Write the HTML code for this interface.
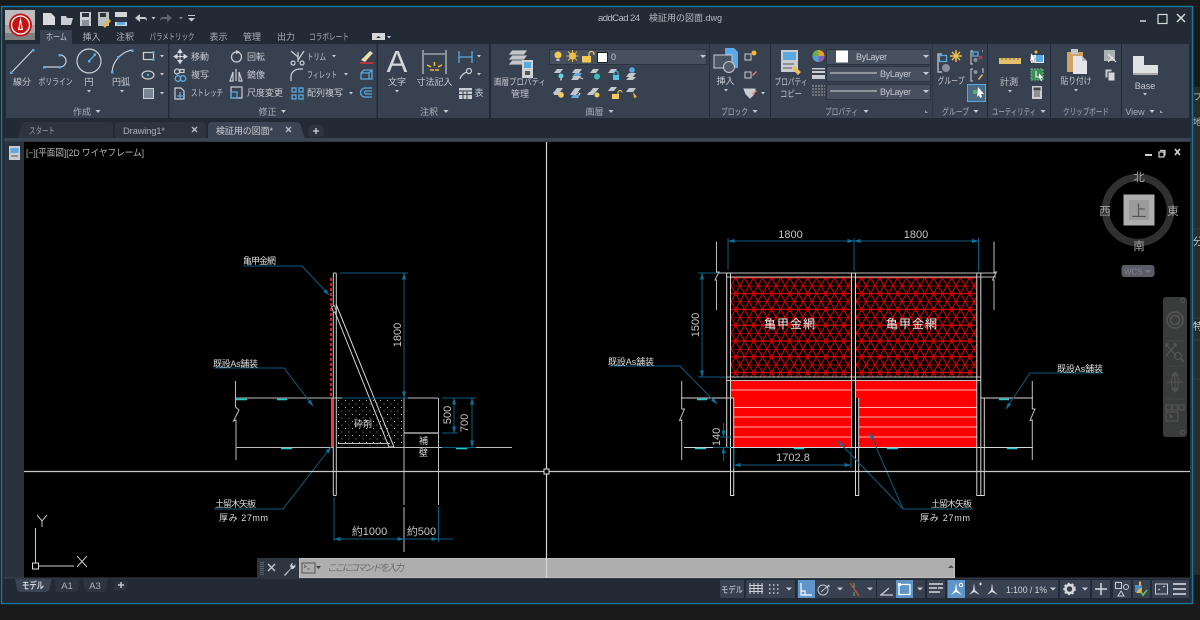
<!DOCTYPE html>
<html><head><meta charset="utf-8"><style>
html,body{margin:0;padding:0;background:#1a1a1a;width:1200px;height:620px;overflow:hidden}
svg{display:block;font-family:"Liberation Sans","Noto Sans CJK JP",sans-serif}
.t{fill:#c6cad0;font-size:9px;text-anchor:middle}
.s{fill:#c6cad0;font-size:9px}
.l{fill:#aab0b8;font-size:9px;text-anchor:middle}
.d{fill:#dcdcdc;font-size:9px}
.n{fill:#c4c4c4;font-size:11px;text-anchor:middle;font-family:"Liberation Sans",sans-serif}
.ic{fill:none;stroke:#ccd0d5;stroke-width:1.2}
.bl{fill:none;stroke:#5ba8e0;stroke-width:1.3}
.dim{stroke:#0b5d80;stroke-width:1;fill:none}
.g{stroke:#bdbdbd;stroke-width:1;fill:none}
.w{stroke:#d6d6d6;stroke-width:1;fill:none}
.c{stroke:#19cfd6;stroke-width:1.600;fill:none}
.ar{fill:#c6cad0}
</style></head><body>
<svg width="1200" height="620" viewBox="0 0 1200 620" xmlns="http://www.w3.org/2000/svg">
<defs>
<marker id="a" markerWidth="7" markerHeight="5" refX="6.5" refY="2.5" orient="auto-start-reverse" markerUnits="userSpaceOnUse"><path d="M0 .5L7 2.5L0 4.5z" fill="#0c6f98"/></marker>
<pattern id="mesh" patternUnits="userSpaceOnUse" x="731" y="285.7" width="9" height="15.8"><path d="M0 0H9M0 7.9H9" stroke="#f00000" stroke-width="1.200"/><path d="M0 0L4.5 7.9L9 0M0 15.8L4.5 7.9L9 15.8" stroke="#e00000" stroke-width="1" fill="none"/></pattern>
<pattern id="dots" patternUnits="userSpaceOnUse" x="337" y="399" width="7" height="7"><rect x="1" y="1" width="1" height="1" fill="#bbb"/><rect x="4.5" y="4.5" width="1" height="1" fill="#999"/></pattern>
</defs>

<rect width="1200" height="620" fill="#1a1a1a"/>
<!-- background right window pieces -->
<rect x="1193" y="87" width="7" height="533" fill="#2b2b2b"/>
<rect x="1193" y="575" width="7" height="45" fill="#1a1a1a"/>
<path d="M1193 229H1200M1193 318H1200M1193 340H1200M1193 379H1200" stroke="#3c3c3c"/>
<text x="1193" y="100" fill="#bbb" font-size="9">プロ</text><text x="1193" y="125" fill="#bbb" font-size="9">地</text>
<text x="1193" y="245" fill="#ccc" font-size="10">分</text><text x="1193" y="330" fill="#ccc" font-size="10">特</text>

<!-- window -->
<rect x="1.5" y="6.5" width="1191" height="597" fill="#222a35" stroke="#14789f" stroke-width="1.4"/>
<rect x="4" y="141" width="1187" height="437" fill="#2a323e"/>
<!-- logo -->
<rect x="5" y="10" width="30" height="30" fill="#a5a5a5"/>
<rect x="5" y="10" width="30" height="15" fill="#bdbdbd"/>
<rect x="5" y="33" width="30" height="7" fill="#7f7f7f"/>
<circle cx="20.5" cy="25" r="11.5" fill="#c01515"/><circle cx="20.5" cy="25" r="9" fill="none" stroke="#fff" stroke-width="1.3"/><path d="M20.5 17L18 30H23z" fill="#fff"/><path d="M20.5 22L19.500 29H21.500z" fill="#c01515"/>
<!-- QAT -->
<path d="M43 13h8l4 4v8H43z" fill="#d7d9dc"/>
<path d="M61 16h5l1 2h6l-2 7H61z" fill="#c9ccd0"/>
<path d="M80 12h11v14H80z" fill="#c9ccd0"/><rect x="82" y="13" width="7" height="4" fill="#2a323e"/><rect x="82" y="20" width="7" height="6" fill="#8a9099"/>
<path d="M98 12h11v14H98z" fill="#b9bcc0"/><rect x="100" y="13" width="6" height="4" fill="#2a323e"/><path d="M103 26l6-7 2 2-6 7z" fill="#e3b646"/>
<rect x="115" y="12" width="12" height="14" fill="#d4d6da"/><rect x="115" y="17" width="12" height="5" fill="#2d3540"/><rect x="117" y="22" width="8" height="3" fill="#55aee8"/>
<path d="M135 18l5-4v3h4c2 0 3 1 3 4-1-2-2-2-3-2h-4v3z" fill="#c9ccd0"/><path d="M151.500 17h4l-2 2.500z" class="ar"/>
<path d="M172 18l-5-4v3h-4c-2 0-3 1-3 4 1-2 2-2 3-2h4v3z" fill="#5d6570"/><path d="M179 17h4l-2 2.500z" fill="#7b828c"/>
<path d="M188 15h7v1h-7zM188 18h7l-3.500 3.500z" class="ar"/>
<text x="598" y="21" fill="#b8bcc2" font-size="9.500" textLength="42">addCad 24</text>
<text x="649" y="21" fill="#b8bcc2" font-size="9" textLength="73">検証用の図面.dwg</text>
<path d="M1140 21h6" stroke="#d8d8d8" stroke-width="1.500"/><rect x="1158" y="14.500" width="9" height="9" fill="none" stroke="#d8d8d8" stroke-width="1.200"/><path d="M1177 14l8 8M1185 14l-8 8" stroke="#e2e2e2" stroke-width="1.400"/>

<!-- ribbon tabs -->
<rect x="40" y="30" width="32" height="14" fill="#38414f"/>
<text class="t" x="56.500" y="40" textLength="21" lengthAdjust="spacingAndGlyphs">ホーム</text>
<text class="l" x="91.500" y="40">挿入</text><text class="l" x="125" y="40">注釈</text><text class="l" x="172" y="40" textLength="45" lengthAdjust="spacingAndGlyphs">パラメトリック</text><text class="l" x="218.500" y="40">表示</text><text class="l" x="252" y="40">管理</text><text class="l" x="286" y="40">出力</text><text class="l" x="329" y="40" textLength="40" lengthAdjust="spacingAndGlyphs">コラボレート</text>
<rect x="372" y="33" width="13" height="7" fill="#d5d7da"/><path d="M376 38h5l-2.500-2z" fill="#333"/><path d="M387 36h4l-2 2.500z" class="ar"/>

<!-- ribbon panels -->
<g fill="#38414f">
<rect x="6" y="44" width="162" height="74"/><rect x="169.500" y="44" width="207" height="74"/><rect x="378" y="44" width="111" height="74"/><rect x="491" y="44" width="218" height="74"/><rect x="710" y="44" width="60" height="74"/><rect x="771" y="44" width="161.500" height="74"/><rect x="933" y="44" width="54" height="74"/><rect x="988" y="44" width="62" height="74"/><rect x="1051" y="44" width="70" height="74"/><rect x="1122" y="44" width="67" height="74"/>
</g>
<g id="ribbon-labels">
<text class="l" x="82" y="115">作成</text><text class="l" x="267.500" y="115">修正</text><text class="l" x="429" y="115">注釈</text><text class="l" x="594.500" y="115">画層</text><text class="l" x="734.500" y="115" textLength="27" lengthAdjust="spacingAndGlyphs">ブロック</text><text class="l" x="841.500" y="115" textLength="33" lengthAdjust="spacingAndGlyphs">プロパティ</text><text class="l" x="955.500" y="115" textLength="27" lengthAdjust="spacingAndGlyphs">グループ</text><text class="l" x="1014" y="115" textLength="44" lengthAdjust="spacingAndGlyphs">ユーティリティ</text><text class="l" x="1086" y="115" textLength="46" lengthAdjust="spacingAndGlyphs">クリップボード</text>
<text class="l" x="1135" y="115" font-size="9.500">View</text>
<path d="M95.500 110h5l-2.500 3zM281 110h5l-2.500 3zM443.500 110h5l-2.500 3zM608.500 110h5l-2.500 3zM752.500 110h5l-2.500 3zM863.500 110h5l-2.500 3zM973.500 110h5l-2.500 3zM1040.500 110h5l-2.500 3zM1149.500 110h5l-2.500 3z" class="ar"/>
<path d="M925 110l3 3h-3zM1160 110l3 3h-3z" fill="#9aa0a8"/>
</g>

<!-- 作成 -->
<path class="ic" d="M11 73L33 50"/><g fill="#5ba8e0"><rect x="10" y="71.500" width="2.500" height="2.500"/><rect x="32" y="49" width="2.500" height="2.500"/></g>
<path class="ic" d="M44 67H60A6 6 0 0 0 60 55H59"/><g fill="#5ba8e0"><rect x="43" y="66" width="2.500" height="2.500"/><rect x="58.500" y="66" width="2.500" height="2.500"/><rect x="58.500" y="54" width="2.500" height="2.500"/></g>
<circle class="ic" cx="89" cy="61" r="12"/><path class="bl" d="M89 61L95 55"/><g fill="#5ba8e0"><rect x="88" y="60" width="2.500" height="2.500"/><rect x="93.500" y="53.500" width="2.500" height="2.500"/></g>
<path class="ic" d="M112 72C113 60 122 52 132 50"/><g fill="#5ba8e0"><rect x="111" y="71" width="2.500" height="2.500"/><rect x="131" y="49.500" width="2.500" height="2.500"/><rect x="117" y="56" width="2.500" height="2.500"/></g>
<text class="t" x="22" y="85">線分</text><text class="t" x="55.500" y="85" textLength="34" lengthAdjust="spacingAndGlyphs">ポリライン</text><text class="t" x="89" y="85">円</text><text class="t" x="121" y="85">円弧</text>
<path class="ar" d="M87 90h4l-2 2.500zM120 90h4l-2 2.500zM160 55h4l-2 2.500zM160 73h4l-2 2.500zM160 92h4l-2 2.500z"/>
<rect class="ic" x="143.500" y="52.500" width="10" height="7"/><g fill="#5ba8e0"><rect x="152.500" y="59" width="2" height="2"/><rect x="152.500" y="51" width="2" height="2"/></g>
<ellipse class="ic" cx="148" cy="75" rx="6" ry="4"/><circle cx="148" cy="75" r="1.200" fill="#5ba8e0"/>
<rect x="143.500" y="88.500" width="10" height="10" fill="#7a8593" stroke="#ccd0d5"/>

<!-- 修正 -->
<path d="M180 51v11M175 56.500h11M180 49.500l-2 3h4zM180 63.500l-2-3h4zM174 56.500l3-2v4zM187 56.500l-3-2v4z" fill="#d6d9dd" stroke="#d6d9dd"/>
<circle class="ic" cx="177" cy="71.500" r="2.500"/><rect class="ic" x="180" y="69.500" width="4" height="3"/><circle class="bl" cx="178" cy="78.500" r="2.800"/><circle class="bl" cx="183" cy="78.500" r="2.800"/>
<path class="ic" d="M175 88h6l3 3v8h-9z"/><path class="bl" d="M180 92v7M177 96h6"/>
<circle class="ic" cx="236.500" cy="57" r="5"/><path d="M236 50l4 2-4 2z" fill="#ccd0d5"/>
<path class="ic" d="M236 69v12M233 72l-3 9h3zM239 72l3 9h-3z"/>
<rect class="ic" x="231" y="87" width="11" height="11"/><rect class="bl" x="231" y="92" width="6" height="6"/>
<path class="ic" d="M291 51l7 6M304 51l-6 9M293 61a2 2 0 1 0 .1 0M302 61a2 2 0 1 0 .1 0M298 52v10"/>
<path class="ic" d="M291 81v-4c0-5 4-8 9-8h3"/>
<g fill="none" stroke="#5ba8e0" stroke-width="1.300"><rect x="292" y="88" width="4" height="4"/><rect x="299" y="88" width="4" height="4"/><rect x="292" y="95" width="4" height="4"/><rect x="299" y="95" width="4" height="4"/></g>
<path class="ar" d="M332 55h4l-2 2.500zM344 73h4l-2 2.500zM349 92h4l-2 2.500z"/>
<text class="s" x="191" y="60">移動</text><text class="s" x="191" y="78">複写</text><text class="s" x="191" y="96" textLength="32" lengthAdjust="spacingAndGlyphs">ストレッチ</text>
<text class="s" x="247" y="60">回転</text><text class="s" x="247" y="78">鏡像</text><text class="s" x="247" y="96">尺度変更</text>
<text class="s" x="307" y="60" textLength="19" lengthAdjust="spacingAndGlyphs">トリム</text><text class="s" x="307" y="78" textLength="30" lengthAdjust="spacingAndGlyphs">フィレット</text><text class="s" x="307" y="96">配列複写</text>
<path d="M361 60l9-9 3 2-8 9z" fill="#e8dcb0"/><path d="M360 63h13" stroke="#d33" stroke-width="1.500"/>
<path class="bl" d="M361 73l3-3h8v9h-11zM361 73h8v6M369 73l3-3"/>
<path class="bl" d="M372 88h-7a4 4 0 0 0 0 9h7M372 91h-6a1.500 1.500 0 0 0 0 3h6"/>

<!-- 注釈 -->
<text x="397" y="72" font-size="31" fill="#d4d7db" text-anchor="middle" font-family="Liberation Sans,sans-serif">A</text>
<text class="t" x="397" y="85">文字</text><path class="ar" d="M395 90h4l-2 2.500z"/>
<path d="M423 50v24M446 50v24" stroke="#b9bdc3" stroke-width="1.300"/><path d="M424 54h21" stroke="#ccd0d5"/><path d="M427 65l4 2M442 65l-4 2M434.500 62v4M430 70h4M435 70h4" stroke="#eebb33" stroke-width="1.500"/>
<text class="t" x="434.500" y="85">寸法記入</text>
<path class="bl" d="M459 51v12M472 51v12M459 57h13"/><path class="ar" d="M477 55h4l-2 2.500zM477 73h4l-2 2.500z"/>
<circle class="ic" cx="469" cy="71" r="2.500"/><path class="ic" d="M460 79c1-4 4-6 7-7"/>
<rect x="459" y="88" width="13" height="11" fill="#c9ccd0"/><path d="M459 91h13M459 94.500h13M463 91v8M467 91v8" stroke="#38414f"/>
<text class="t" x="479" y="96">表</text>

<!-- 画層 -->
<path d="M512 50h16l-4 5h-16zM512 55h16l-4 5h-16zM512 60h16l-4 5h-16z" fill="#c3c6ca" stroke="#38414f" stroke-width=".8"/>
<rect x="522" y="60" width="11" height="18" fill="#d0d2d5"/><rect x="524" y="62" width="7" height="6" fill="#5aa9e0"/><rect x="525" y="71" width="5" height="4" fill="#555"/>
<text class="t" x="520" y="85" textLength="52" lengthAdjust="spacingAndGlyphs">画層プロパティ</text><text class="t" x="520" y="97">管理</text>
<rect x="549.500" y="49.500" width="157" height="15" fill="#47505f" stroke="#2c3440"/>
<circle cx="558" cy="55" r="3.500" fill="#f1cb56"/><rect x="556.500" y="59" width="3" height="2" fill="#ccc"/>
<circle cx="572.500" cy="56" r="3.500" fill="#f1cb56"/><path d="M572.500 50v12M566.500 56h12M568 51.500l9 9M577 51.500l-9 9" stroke="#e9b94a"/>
<rect x="582" y="56" width="9" height="6.500" fill="#f1cb56"/><path d="M589 56v-2a2.500 2.500 0 0 1 5 0v1" fill="none" stroke="#f1cb56" stroke-width="1.300"/>
<rect x="597.500" y="52.500" width="10" height="10" fill="#fff" stroke="#222"/>
<text class="s" x="611" y="60">0</text><path class="ar" d="M700 55h6l-3 3z"/>
<g id="layers">
<path d="M557 69h6l-3 4h-6zM575 69h7l-3 4h-7zM593 69h6l-3 4h-6zM611 69h6l-3 4h-6zM629 73h7l-3 4h-7z" fill="#c3c6ca"/>
<circle cx="561" cy="76" r="2.500" fill="#65d2df"/><rect x="560" y="78.500" width="2" height="2" fill="#aaa"/>
<path d="M575 73h7l-3 4h-7z" fill="#63a8d8"/><path d="M574 76h7l-3 4h-7z" fill="#c3c6ca"/><path d="M579 77l4 2" stroke="#ccc"/>
<circle cx="597" cy="76.500" r="3" fill="#39c0b8"/>
<rect x="613" y="75" width="6" height="5" fill="#5ac0e0"/><path d="M614 75v-2a2 2 0 0 1 4 0v2" fill="none" stroke="#5ac0e0"/>
<circle cx="632" cy="70" r="2.800" fill="#5aa9e0"/><path d="M629 77h7l-3 3h-7z" fill="#c3c6ca"/>
<path d="M557 88h6l-3 4h-6zM553 92h10l-3 3h-6zM575 88h6l-3 4h-6zM593 88h6l-3 4h-6zM611 87h6l-3 4h-6zM629 88h7l-3 4h-7zM589 92h7l-3 3h-6zM572 92h7l-3 3h-6z" fill="#c3c6ca"/>
<circle cx="561" cy="95" r="2.800" fill="#f1cb56"/><path d="M580 93l-3 5" stroke="#d8d8d8" stroke-width="1.300"/><path d="M573 95h7l-3 3h-6z" fill="#5aa9e0"/>
<circle cx="597" cy="95" r="2.500" fill="#f1cb56"/><rect x="612" y="94" width="7" height="5" fill="#f1cb56"/><path d="M618 94v-1.500a2 2 0 0 1 4 0" fill="none" stroke="#f1cb56"/>
<path d="M633 92l4 5-3 1z" fill="#e3b646"/>
</g>
<!-- ブロック -->
<path d="M725 48h9l4 4v16h-13z" fill="#5aa9e8"/><rect x="714" y="55" width="18" height="13" fill="#4b5563" stroke="#c9ccd0"/><circle cx="729" cy="67" r="5.500" fill="#555d69" stroke="#c9ccd0"/>
<text class="t" x="725.500" y="84">挿入</text><path class="ar" d="M724 89h4l-2 2.500z"/>
<g fill="none" stroke="#ccd0d5"><rect x="745" y="54" width="6" height="6"/><rect x="745" y="72" width="6" height="6"/><path d="M744 89h11l-1 5-4 4-4-4z" fill="#c9ccd0"/></g>
<circle cx="754" cy="53" r="2.500" fill="#eebb33"/><path d="M752 75l4-4 1 1-4 4z" fill="#e77"/><path d="M752 94l4-4 1 1-4 4z" fill="#e77"/><path class="ar" d="M761 92h4l-2 2.500z"/>
<!-- プロパティ -->
<rect x="781" y="50" width="17" height="22" fill="#c9ccd0"/><rect x="783" y="52" width="13" height="8" fill="#5aa9e0"/><path d="M783 64h11M783 68h9" stroke="#555"/><path d="M794 66l7 6-3 3-6-6z" fill="#e8c060"/>
<text class="t" x="791" y="85" textLength="33" lengthAdjust="spacingAndGlyphs">プロパティ</text><text class="t" x="791" y="97" textLength="22" lengthAdjust="spacingAndGlyphs">コピー</text>
<circle cx="818.500" cy="56" r="6" fill="#d9584a"/><path d="M818.500 56V50a6 6 0 0 1 6 6z" fill="#ea9b33"/><path d="M818.500 56l6 0a6 6 0 0 1-6 6z" fill="#8a5fb5"/><path d="M818.500 56v6a6 6 0 0 1-6-6z" fill="#4da4cf"/><path d="M818.500 56h-6a6 6 0 0 1 6-6z" fill="#60b34e"/>
<path d="M812 68h13v1.500H812zM812 71h13v2H812zM812 75h13v4H812z" fill="#c9ccd0"/>
<path d="M812 86h13M812 89h13M812 92h13M812 95h13" stroke="#aaa" stroke-dasharray="2 1"/>
<g fill="#47505f" stroke="#2c3440"><rect x="826.500" y="49.500" width="104" height="15"/><rect x="826.500" y="66.500" width="104" height="15"/><rect x="826.500" y="84.500" width="104" height="15"/></g>
<rect x="836" y="50.500" width="12" height="12" fill="#fff"/>
<text class="s" x="856" y="60" textLength="31">ByLayer</text><text class="s" x="880" y="77" textLength="31">ByLayer</text><text class="s" x="880" y="95" textLength="31">ByLayer</text>
<path d="M830 73h47M830 91h47" stroke="#d8d8d8"/><path class="ar" d="M923 55h6l-3 3zM923 72h6l-3 3zM923 90h6l-3 3z"/>
<!-- グループ -->
<path class="ic" d="M942 54h-4v18h4M950 54h0"/><rect class="bl" x="939.500" y="55.500" width="7" height="6"/><circle cx="946" cy="68" r="4" fill="#8a9099"/><path d="M956 50v12M950 56h12M952 52l8 8M960 52l-8 8" stroke="#e9c050" stroke-width="1.500"/>
<text class="t" x="951" y="84" textLength="27" lengthAdjust="spacingAndGlyphs">グループ</text>
<g fill="none" stroke="#ccd0d5"><path d="M973 51h-2v13h2M983 51h-1M973 69h-2v12h2M982 69h1v4M973 86h-2v11h2"/></g>
<rect class="bl" x="973" y="52" width="5" height="4"/><circle cx="975.500" cy="60" r="2" fill="#8a9099"/><path d="M979 56l3 3M982 56l-3 3" stroke="#d33" stroke-width="1.300"/>
<circle cx="975.500" cy="72" r="2" fill="#8a9099"/><path d="M978 79l4-5 1 1-4 5z" fill="#e8c060"/>
<rect x="967.500" y="84.500" width="18" height="17" fill="#4a6a84" stroke="#5ba8e0"/><circle cx="975" cy="92" r="2.200" fill="#59b36b"/><path d="M978 87l6 7-3 0 1 3-2 1-1-3-2 2z" fill="#fff"/>
<!-- ユーティリティ -->
<rect x="999" y="58" width="22" height="6" fill="#e4c16a"/><path d="M1002 58v2M1006 58v2M1010 58v2M1014 58v2M1018 58v2" stroke="#7a6230"/>
<text class="t" x="1009" y="85">計測</text><path class="ar" d="M1008 90h4l-2 2.500z"/>
<rect x="1031" y="55" width="13" height="8" fill="#e8eaec"/><rect x="1036" y="55" width="7" height="7" fill="#5aa9e0"/><path d="M1031 53l5 6-2 0 1 3-2 1-1-3-2 2z" fill="#fff" stroke="#333" stroke-width=".3"/><circle cx="1036" cy="52" r="1.500" fill="#eebb33"/>
<rect x="1031" y="69" width="12" height="11" fill="#3f8b57" stroke="#64bd7e" stroke-dasharray="2 1"/><path d="M1036 71v6h3" stroke="#fff" fill="none"/><path d="M1039 73l4 5h-2l1 3-1 0-1-3-1 1z" fill="#fff"/>
<rect x="1032" y="86" width="10" height="13" fill="#c9ccd0"/><rect x="1033.500" y="87.500" width="7" height="3" fill="#444"/><path d="M1034 92h6M1034 94h6M1034 96h6" stroke="#555"/>
<!-- クリップボード -->
<rect x="1067" y="52" width="16" height="20" fill="#d0a466"/><rect x="1071" y="49" width="7" height="5" fill="#c4c6c9"/><path d="M1073 56h9l5 5v13h-14z" fill="#e4e6e9"/><path d="M1082 56v5h5" fill="#bbb"/>
<text class="t" x="1076" y="84" textLength="31" lengthAdjust="spacingAndGlyphs">貼り付け</text><path class="ar" d="M1074 89h4l-2 2.500z"/>
<rect x="1104" y="50" width="11" height="11" fill="#aab0b6"/><path d="M1108 54l8 8M1108 62l5-5" stroke="#eee"/>
<rect x="1105" y="69" width="7" height="9" fill="#c9ccd0" stroke="#38414f"/><rect x="1108" y="72" width="7" height="9" fill="#d6d8da" stroke="#38414f"/>
<!-- Base -->
<path d="M1133 56h11v9h14v10h-25z" fill="#dfe1e3"/><path d="M1133 73h25v2h-25z" fill="#aaa"/>
<text class="t" x="1145" y="89">Base</text><path class="ar" d="M1143 93h4l-2 2.500z"/>

<!-- doc tabs -->
<rect x="4" y="118" width="1187" height="21" fill="#222a35"/>
<path d="M17 139L22 125Q23 122 27 122H108Q113 122 113 126V139z" fill="#2c3440"/>
<path d="M115 139V126Q115 122 120 122H201Q206 122 206 126V139z" fill="#2c3440"/>
<path d="M208 139V126Q208 122 213 122H295Q300 122 301 126L305 139z" fill="#3a4452"/>
<rect x="308" y="125" width="16" height="12" rx="4" fill="#2c3440"/>
<text x="29" y="134" fill="#9aa0a8" font-size="9" textLength="26" lengthAdjust="spacingAndGlyphs">スタート</text>
<text x="123" y="134" fill="#a8adb5" font-size="9.500" textLength="42">Drawing1*</text>
<text x="216" y="134" fill="#d0d3d8" font-size="9" textLength="57">検証用の図面*</text>
<path d="M192 127l5 5M197 127l-5 5M286 127l5 5M291 127l-5 5" stroke="#bcc0c6" stroke-width="1.300"/>
<path d="M316 128v6M313 131h6" stroke="#c0c4ca" stroke-width="1.500"/>
<rect x="4" y="138" width="1187" height="3.500" fill="#3a4452"/>
<!-- left bar -->
<rect x="9" y="146" width="11" height="14" fill="#c9ccd0"/><rect x="10.500" y="148" width="8" height="5" fill="#5aa9e0"/><path d="M11 156h7" stroke="#555"/>

<!-- viewport -->
<rect x="24" y="142" width="1166" height="436" fill="#000"/>
<text x="26" y="156" fill="#b8b8b8" font-size="9.500" textLength="118" lengthAdjust="spacingAndGlyphs">[−][平面図][2D ワイヤフレーム]</text>
<path d="M1145 155h7" stroke="#d0d0d0" stroke-width="2"/><path d="M1160 150.500h5v5M1159 152h5v5h-5z" fill="none" stroke="#d0d0d0" stroke-width="1.200"/><path d="M1175 149l5 6M1180 149l-5 6" stroke="#d8d8d8" stroke-width="1.600"/>

<!-- LEFT DRAWING -->
<rect x="333.300" y="273" width="3" height="222.500" rx="1" fill="#000" stroke="#d0d0d0"/>
<path d="M331 278V398" stroke="#e21a1a" stroke-width="2" stroke-dasharray="3 2"/>
<path class="w" d="M333 307L389 447H394M336 304L394 447"/>
<rect x="332.500" y="306" width="3" height="6" fill="#000" stroke="#ddd" stroke-width=".8" transform="rotate(-20 334 309)"/>
<rect x="337" y="399" width="67" height="47" fill="url(#dots)"/>
<rect x="331" y="398" width="2.800" height="49" fill="#f43a3a"/>
<path class="g" d="M236 398H438M236 447.500H333M338 443.500H390M336 447.500H512"/>
<path d="M235.500 381V407L239 410L233.500 421L236 420V460" class="g"/>
<path class="c" d="M236 399.500H247M277 399.500H287M281 448.500H292M456 448.500H467" />
<path class="g" d="M404 398V505M404 507V552"/><path class="g" d="M438.500 398V505"/><path d="M404 433H438" stroke="#d0d0d0" stroke-width="1.300"/>
<text class="d" x="419" y="444">補</text><text class="d" x="419" y="456">壁</text>
<text class="d" x="354" y="427">砕剤</text>
<path class="dim" d="M340 273H408M408 398H342M442 398H476M442 433H458M442 447.500H476" />
<path class="dim" d="M404 273V398" marker-start="url(#a)" marker-end="url(#a)"/>
<path class="dim" d="M454 398V433" marker-start="url(#a)" marker-end="url(#a)"/>
<path class="dim" d="M472 398V447" marker-start="url(#a)" marker-end="url(#a)"/>
<text class="n" transform="translate(401,335) rotate(-90)">1800</text>
<text class="n" transform="translate(451,415) rotate(-90)">500</text>
<text class="n" transform="translate(468,423) rotate(-90)">700</text>
<path class="dim" d="M243 266H302L329 295" marker-end="url(#a)"/>
<path class="dim" d="M214 368H284L313 406" marker-end="url(#a)"/>
<path class="dim" d="M214 509H283L331 447" marker-end="url(#a)"/>
<text class="d" x="243" y="264" textLength="33">亀甲金網</text>
<text class="d" x="213" y="367" textLength="45">既設As舗装</text>
<text class="d" x="215" y="507" textLength="41">土留木矢板</text>
<text class="d" x="219" y="521" font-size="10" textLength="49">厚み 27mm</text>
<path class="dim" d="M334 497V541M438.500 507V542"/><path class="dim" d="M334 539H404" marker-start="url(#a)" marker-end="url(#a)"/><path class="dim" d="M404 539H438" marker-end="url(#a)"/><path class="dim" d="M438 539H453"/>
<text class="n" x="369.500" y="535" font-size="10.500" font-family="Liberation Sans,Noto Sans CJK JP,sans-serif">約1000</text>
<text class="n" x="421.500" y="535" font-size="10.500">約500</text>

<!-- RIGHT DRAWING -->
<rect x="731" y="277" width="120.300" height="99.500" fill="url(#mesh)"/>
<rect x="856" y="277" width="121" height="99.500" fill="url(#mesh)"/>
<path d="M731 381H851.300V447H734V398H731z" fill="#ff0000"/>
<path d="M856 381H977V447H859V398H856z" fill="#ff0000"/>
<path d="M731 390H851M734 407.500H851M734 417H851M734 427H851M734 437H851M856 390H977M859 407.500H977M859 417H977M859 427H977M859 437H977" stroke="#ffb0b0" stroke-width="1"/>
<path class="g" d="M715 273H996M727 277H996M727 377H981M727 380.500H981"/>
<path class="w" d="M681 398H734M684 447.500H1033M980.700 398H1033"/>
<path class="w" d="M726.700 273V448M730.500 273V495.500H733.700V398M851.500 273V448M855.500 273V495.500H858.700V398M976.800 273V495.500H984.300V398M980.800 273V495.500M726.700 273H730.500M851.500 273H855.500M976.800 273H980.800"/>
<path class="g" d="M716.500 241.500V272L719 272L715 280L716.500 280V310M994 241.500V272L996.500 272L992.500 280L994 280V310"/>
<path class="g" d="M681.700 381V409L684.500 409L679.500 420.500L681.700 420V460M1032.300 381V409L1035 409L1030 420.500L1032.300 420V460"/>
<path class="c" d="M697 399.500H707M695 448.500H706M794 448.500H804M887 448.500H898M999 399.500H1009M1007 448.500H1017"/>
<path class="dim" d="M728 238V270M854 238V271M978.500 238V271M698 273H718M698 377H726"/>
<path class="dim" d="M728 241H854" marker-start="url(#a)" marker-end="url(#a)"/>
<path class="dim" d="M854 241H978.500" marker-start="url(#a)" marker-end="url(#a)"/>
<path class="dim" d="M702 273V377" marker-start="url(#a)" marker-end="url(#a)"/>
<path class="dim" d="M734 465H851" marker-start="url(#a)" marker-end="url(#a)"/>
<path class="dim" d="M734 448V468M851 448V468M720 437H731M713 447.500H731"/>
<path class="dim" d="M723.500 423V437" marker-end="url(#a)"/><path class="dim" d="M723.500 461V447" marker-end="url(#a)"/>
<text class="n" x="790.500" y="238">1800</text><text class="n" x="916" y="238">1800</text>
<text class="n" transform="translate(699,325) rotate(-90)">1500</text>
<text class="n" transform="translate(720,437) rotate(-90)" font-size="10">140</text>
<text class="n" x="793" y="461">1702.8</text>
<text x="790" y="328" fill="#eee" font-size="12" text-anchor="middle" letter-spacing="1">亀甲金網</text>
<text x="912" y="328" fill="#eee" font-size="12" text-anchor="middle" letter-spacing="1">亀甲金網</text>
<path class="dim" d="M609 366H680L717 404" marker-end="url(#a)"/>
<path class="dim" d="M1103 373H1030L1006 409" marker-end="url(#a)"/>
<path class="dim" d="M973 509H903L838 441" marker-end="url(#a)"/>
<path class="dim" d="M903 509L870 433" marker-end="url(#a)"/>
<text class="d" x="608" y="365" textLength="46">既設As舗装</text>
<text class="d" x="1057" y="372" textLength="46">既設As舗装</text>
<text class="d" x="931" y="507" textLength="41">土留木矢板</text>
<text class="d" x="920" y="521" font-size="10" textLength="50">厚み 27mm</text>

<!-- crosshair -->
<path d="M24 471.500H1190" stroke="#c8c8c8" stroke-width="1.200"/>
<!-- UCS -->
<path d="M35.500 528V566H74" stroke="#cfcfcf" fill="none"/><rect x="32.500" y="563" width="6" height="6" fill="#000" stroke="#dedede"/>
<path d="M37 515l5 6 5-6M42 521v6M77 556l10 11M87 556l-10 11" stroke="#c6c6c6" fill="none"/>

<!-- viewcube -->
<circle cx="1138" cy="210" r="32.500" fill="none" stroke="#303030" stroke-width="7.500"/>
<rect x="1123.500" y="194.500" width="31" height="31" fill="#aeaeae"/><rect x="1129" y="200" width="20" height="20" fill="#9b9b9b"/>
<text x="1139" y="216" font-size="15" fill="#555" text-anchor="middle">上</text>
<g fill="#a5a5a5" font-size="11.500" text-anchor="middle"><text x="1139" y="181">北</text><text x="1139" y="250">南</text><text x="1105" y="215">西</text><text x="1173" y="215">東</text></g>
<rect x="1121.500" y="265" width="33" height="12" rx="3" fill="#5c5c66"/><text x="1124" y="274.500" font-size="8" fill="#85858d" font-family="Liberation Sans,sans-serif">WCS</text><path d="M1145 270h6l-3 3z" fill="#7b7b84"/>
<!-- navbar -->
<rect x="1163" y="297" width="24" height="140" rx="3" fill="#3a3b3b"/>
<g fill="none" stroke="#555"><circle cx="1175" cy="320" r="8" stroke-width="1.500"/><circle cx="1175" cy="320" r="4.500" stroke-width="1.500"/><circle cx="1182.500" cy="300.500" r="2"/><circle cx="1182.500" cy="432.500" r="2"/>
<path d="M1166 344l10 12M1176 344l-10 12M1166 347v-3h3M1176 347v-3h-3" stroke-width="1.200"/><circle cx="1178" cy="356" r="3.500" stroke-width="1.300"/><path d="M1181 359l3 3" stroke-width="1.500"/>
<path d="M1175 374v16M1167 382h16M1175 372l-3 3h6zM1175 392l-3-3h6z"/><ellipse cx="1175" cy="382" rx="3.500" ry="8"/>
<rect x="1166" y="405" width="5" height="5"/><rect x="1172.500" y="405" width="5" height="5"/><rect x="1179" y="405" width="5" height="5"/><rect x="1166" y="412" width="12" height="9"/></g><path d="M1169.500 414v5l4-2.500z" fill="#555"/>
<path d="M1166 366h18M1166 399h18M1166 341h18" stroke="#464747"/>

<!-- status strip -->
<rect x="4" y="578" width="1187" height="25" fill="#222a35"/>
<path d="M4 578H1191" stroke="#38414f"/>
<path d="M15 579H52L49 590Q48 592 44 592H21Q18 592 17 589z" fill="#3a4452"/>
<path d="M54 579H80L78 590Q77 592 74 592H60Q57 592 56 590z" fill="#2c3440"/>
<path d="M83 579H108L106 590Q105 592 102 592H89Q86 592 85 590z" fill="#2c3440"/>
<path d="M116 581H128L126 590H113z" fill="#2c3440"/>
<text x="33" y="589" font-size="9.500" fill="#d2d5da" text-anchor="middle" font-weight="bold" textLength="22" lengthAdjust="spacingAndGlyphs">モデル</text>
<text x="67" y="589" font-size="9.500" fill="#aab0b8" text-anchor="middle">A1</text><text x="95" y="589" font-size="9.500" fill="#aab0b8" text-anchor="middle">A3</text>
<path d="M121 582v6M118 585h6" stroke="#bfc3c9" stroke-width="1.500"/>

<!-- command line -->
<rect x="257" y="558" width="42" height="20" fill="#2d3541"/>
<path d="M261 562v14M263 562v14" stroke="#8c939c" stroke-dasharray="1 1"/>
<path d="M268 564l7 7M275 564l-7 7" stroke="#c6cad0" stroke-width="1.400"/>
<path d="M284 575l7-7a3 3 0 0 1 2-5l-1 2 2 1 1-2a3.500 3.500 0 0 1-4 5l-6 7z" fill="#c6cad0"/>
<rect x="299.500" y="558.500" width="655" height="19" fill="#aeaeae" stroke="#bdbdbd"/>
<rect x="302" y="563" width="13" height="10" fill="none" stroke="#555"/><path d="M304 565l2 1.500-2 1.500M307 569h3" stroke="#555" fill="none" stroke-width=".8"/><path d="M316 566h5l-2.500 3z" fill="#444"/>
<text x="327" y="571" font-size="9.500" fill="#6a6a6a" font-style="italic" textLength="77">ここにコマンドを入力</text>
<path d="M948 568h6l-3-3z" fill="#555"/>
<path d="M546.500 142V578" stroke="#d6d6d6" stroke-width="1.200"/>
<rect x="544" y="469" width="5" height="5" fill="#000" stroke="#e6e6e6"/>

<!-- status buttons -->
<g fill="#38414f"><rect x="720" y="580" width="24" height="18"/><rect x="746" y="580" width="49" height="18"/><rect x="797" y="580" width="79" height="18"/><rect x="877" y="580" width="48" height="18"/><rect x="927" y="580" width="18" height="18"/><rect x="947" y="580" width="111" height="18"/><rect x="1060" y="580" width="30" height="18"/><rect x="1092" y="580" width="18" height="18"/><rect x="1113" y="580" width="18" height="18"/><rect x="1133" y="580" width="17" height="18"/><rect x="1152" y="580" width="37" height="18"/></g>
<text x="732" y="593" font-size="9" fill="#d8dadd" text-anchor="middle" textLength="22" lengthAdjust="spacingAndGlyphs">モデル</text>
<path d="M750 583v11M754 583v11M758 583v11M762 583v11M749 585.500h14M749 588.500h14M749 591.500h14" stroke="#d0d3d8"/>
<path d="M769 585h11M769 589h11M769 593h11" stroke="#d0d3d8" stroke-width="1.500" stroke-dasharray="1.500 2.500"/>
<path class="ar" d="M786 587.500h6l-3 3zM837 587.500h6l-3 3zM867 587.500h6l-3 3zM917 587.500h6l-3 3zM1050 587.500h6l-3 3zM1082 587.500h6l-3 3z"/>
<rect x="798" y="580" width="17" height="18" fill="#5f95c9"/><path d="M801 583V595H812M801 591H805V595" stroke="#fff" fill="none" stroke-width="1.200"/>
<circle cx="823" cy="590" r="5" fill="none" stroke="#c0c4ca"/><path d="M821 592l8-7M830 586l-3 .5 1 2" fill="none" stroke="#c0c4ca"/>
<path d="M850 583l9 13" stroke="#c94a3a" stroke-width="1.300"/><path d="M854 583v5M854 592v4" stroke="#63b35c"/>
<path d="M880 595h13M881 595l8-7" stroke="#c9ccd0" stroke-width="1.200"/>
<rect x="896" y="580" width="17" height="18" fill="#5f95c9"/><rect x="899" y="584.500" width="11" height="10" fill="none" stroke="#fff" stroke-width="1.300"/><rect x="898" y="583" width="3" height="3" fill="#fff"/>
<path d="M929 584h14M929 588h8M929 592h11M938 588h5" stroke="#d6d9dd" stroke-width="1.500"/>
<rect x="947.500" y="580" width="17.500" height="18" fill="#5f95c9"/>
<path d="M956 583l1 7 5 5-6-3-5 3 4-5z" fill="#fff"/><circle cx="961" cy="585" r="1.700" fill="none" stroke="#fff"/>
<path d="M974 583l1 7 5 5-6-3-5 3 4-5z" fill="#d6d9dd"/><path d="M979 584h3M980.500 582.500v3" stroke="#d6d9dd"/>
<path d="M992 583l1 7 5 5-6-3-5 3 4-5z" fill="#d6d9dd"/>
<text x="1006" y="593" font-size="9.500" fill="#d6d9dd" textLength="41" lengthAdjust="spacingAndGlyphs">1:100 / 1%</text>
<circle cx="1069.500" cy="589" r="4" fill="none" stroke="#d6d9dd" stroke-width="2.500"/><circle cx="1069.500" cy="589" r="5.500" fill="none" stroke="#d6d9dd" stroke-width="1.500" stroke-dasharray="2 2"/>
<path d="M1101 583v12M1095 589h12" stroke="#d6d9dd" stroke-width="1.500"/>
<rect x="1115.500" y="582.500" width="6" height="6" fill="none" stroke="#c9ccd0"/><circle cx="1126" cy="587" r="2.500" fill="none" stroke="#c9ccd0"/><path d="M1121 591l-3 5h6z" fill="none" stroke="#c9ccd0"/>
<rect x="1135" y="585" width="7" height="7" fill="#4c8ccb"/><rect x="1139" y="581.500" width="2" height="4" fill="#e8b84a"/><path d="M1140 588h2l-1 5h-5z" fill="#e8b84a"/><path d="M1141 592l2 3 4-5" fill="none" stroke="#6fc15f" stroke-width="1.600"/>
<rect x="1155.500" y="584" width="12" height="10" fill="none" stroke="#c9ccd0"/><path d="M1158 590l2-1M1163 587l2-1" stroke="#c9ccd0"/>
<path d="M1173 584h13M1173 589h13M1173 594h13" stroke="#e0e2e5" stroke-width="1.600"/>
</svg>
</body></html>
